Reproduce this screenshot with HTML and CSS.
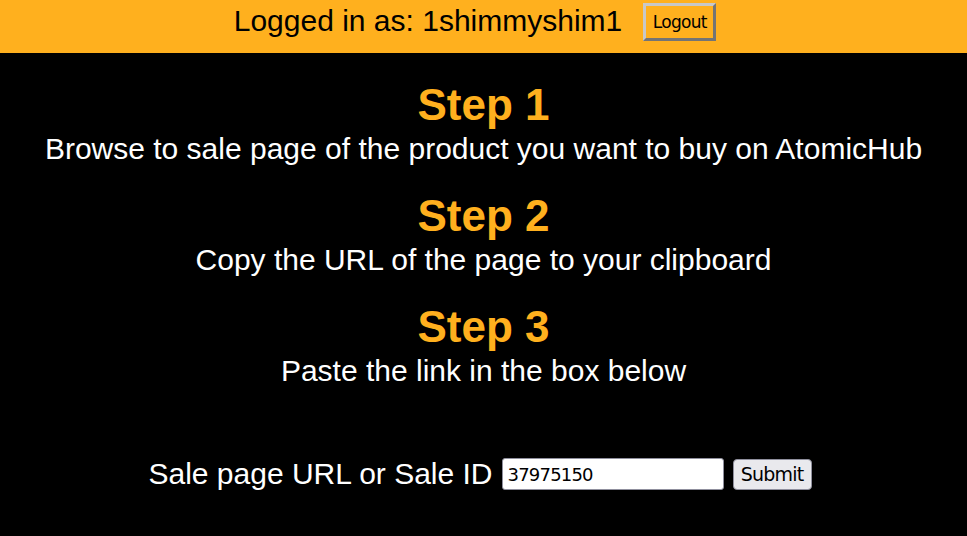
FILE: index.html
```html
<!DOCTYPE html>
<html>
<head>
<meta charset="utf-8">
<link rel="stylesheet" href="styles.css">
</head>
<body>
<header class="topbar">
  <span class="user">Logged in as: 1shimmyshim1</span>
  <button class="logout">Logout</button>
</header>
<main class="steps">
  <section class="step">
    <h2 class="step-title">Step 1</h2>
    <p class="step-text">Browse to sale page of the product you want to buy on AtomicHub</p>
  </section>
  <section class="step">
    <h2 class="step-title">Step 2</h2>
    <p class="step-text">Copy the URL of the page to your clipboard</p>
  </section>
  <section class="step">
    <h2 class="step-title">Step 3</h2>
    <p class="step-text">Paste the link in the box below</p>
  </section>
  <form class="sale-form">
    <label class="sale-label" for="sale">Sale page URL or Sale ID</label>
    <input id="sale" class="sale-input" type="text" value="37975150">
    <button type="button" class="submit">Submit</button>
  </form>
</main>
</body>
</html>
```
FILE: styles.css
```css
html, body {
  margin: 0;
  padding: 0;
  background: #000;
  font-family: "Liberation Sans", Arial, sans-serif;
  color: #fff;
}
.topbar {
  background: #ffb01e;
  height: 53px;
  display: flex;
  justify-content: center;
  align-items: flex-start;
  gap: 21px;
  padding-right: 17px;
  color: #000;
}
.user {
  font-size: 30px;
  line-height: 30px;
  margin-top: 6px;
}
.logout {
  margin-top: 3px;
  height: 38px;
  width: 73px;
  padding: 0;
  font-family: "DejaVu Sans", Tahoma, sans-serif;
  font-size: 17px;
  letter-spacing: -0.7px;
  color: #000;
  background: #ffb01e;
  border: 3px outset #c8c8c8;
}
.steps {
  display: flex;
  flex-direction: column;
  align-items: center;
  padding-top: 28px;
}
.step {
  display: flex;
  flex-direction: column;
  align-items: center;
  height: 111px;
}
.step-title {
  margin: 0;
  font-size: 44px;
  line-height: 48px;
  color: #ffb01e;
  font-weight: bold;
}
.step-text {
  margin: 0;
  font-size: 30px;
  line-height: 40px;
}
.sale-form {
  display: flex;
  align-items: center;
  margin-top: 43px;
  padding-right: 7px;
  gap: 9px;
}
.sale-label {
  font-size: 30px;
}
.sale-input {
  width: 222px;
  height: 32px;
  box-sizing: border-box;
  padding: 1px 5px 0;
  font-family: "DejaVu Sans", Tahoma, sans-serif;
  font-size: 18px;
  letter-spacing: -0.8px;
  border: 1px solid #8f8f9d;
  border-radius: 3px;
  background: #fff;
  color: #000;
}
.submit {
  width: 79px;
  height: 31px;
  padding: 0;
  font-family: "DejaVu Sans", Tahoma, sans-serif;
  font-size: 19px;
  letter-spacing: -0.8px;
  color: #000;
  background: #e9e9ed;
  border: 1px solid #8f8f9d;
  border-radius: 4px;
}
```
